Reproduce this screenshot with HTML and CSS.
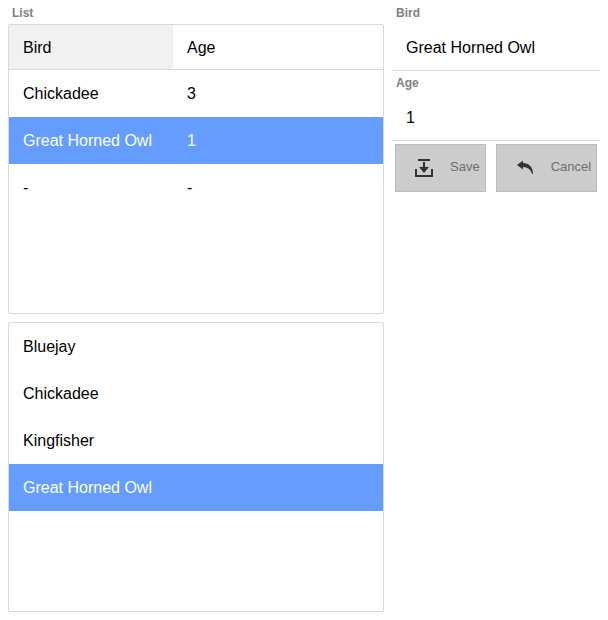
FILE: index.html
```html
<!DOCTYPE html>
<html lang="en">
<head>
<meta charset="utf-8">
<meta name="viewport" content="width=device-width, initial-scale=1">
<title>Birds</title>
<link rel="stylesheet" href="styles.css">
</head>
<body>
<main class="layout">
  <section class="lists">
    <h2 class="label" id="list-label">List</h2>
    <div class="box">
      <table class="grid" aria-labelledby="list-label">
        <thead>
          <tr><th class="current name">Bird</th><th>Age</th></tr>
        </thead>
        <tbody>
          <tr><td>Chickadee</td><td>3</td></tr>
          <tr class="selected"><td>Great Horned Owl</td><td>1</td></tr>
          <tr><td>-</td><td>-</td></tr>
        </tbody>
      </table>
    </div>
    <ul class="box options">
      <li>Bluejay</li>
      <li>Chickadee</li>
      <li>Kingfisher</li>
      <li class="selected">Great Horned Owl</li>
    </ul>
  </section>
  <form class="editor">
    <label class="label" for="bird">Bird</label>
    <input class="field" id="bird" type="text" value="Great Horned Owl">
    <label class="label" for="age">Age</label>
    <input class="field" id="age" type="text" value="1">
    <div class="actions">
      <button class="button" type="button">
        <svg class="icon" viewBox="0 0 24 24" aria-hidden="true"><path d="M6 4h12v2H6zM11 7h2v5h4l-5 6-5-6h4zM3 14h2v6h14v-6h2v8H3z"/></svg>
        <span>Save</span>
      </button>
      <button class="button" type="button">
        <svg class="icon" viewBox="0 0 24 24" aria-hidden="true"><path d="M4 10L10 5.500V8c6 0 10 4 10 11h-1c-1-4-4-7-9-7v2.500z"/></svg>
        <span>Cancel</span>
      </button>
    </div>
  </form>
</main>
</body>
</html>
```
FILE: styles.css
```css
* {
  box-sizing: border-box;
}

body {
  margin: 0;
  background: #fff;
  color: #000;
  font: 16px/20px "Liberation Sans", Arial, sans-serif;
}

.layout {
  display: grid;
  grid-template-columns: 376fr 208fr;
  gap: 8px;
  padding: 1px 8px 8px;
}

.lists,
.editor {
  display: flex;
  flex-direction: column;
  min-width: 0;
}

.label {
  height: 23px;
  margin: 0;
  padding: 4px 4px 3px;
  color: #808080;
  font-size: 12px;
  font-weight: bold;
  line-height: 16px;
}

.box {
  min-height: 290px;
  margin: 0 0 8px;
  padding: 0;
  border: 1px solid #d9d9d9;
  border-radius: 2px;
}

.box:last-child {
  margin-bottom: 0;
}

.grid {
  width: 100%;
  border-collapse: separate;
  border-spacing: 0;
  table-layout: fixed;
}

.grid th,
.grid td {
  height: 47px;
  padding: 0 14px;
  font-weight: normal;
  text-align: left;
}

.grid th {
  height: 45px;
  padding-top: 2px;
  border-bottom: 1px solid #d9d9d9;
}

.grid .name {
  width: 164px;
}

.grid .current {
  background: #f1f1f1;
}

.options {
  list-style: none;
}

.options li {
  padding: 14px 14px 13px;
}

.selected {
  background: #659cff;
  color: #fff;
}

.field {
  width: 100%;
  height: 47px;
  padding: 2px 14px 0;
  border: 0;
  border-bottom: 1px solid #d9d9d9;
  background: transparent;
  color: inherit;
  font: inherit;
}

.actions {
  display: flex;
  gap: 10px;
  padding: 3px;
}

.button {
  display: flex;
  align-items: center;
  gap: 14px;
  height: 48px;
  padding: 0 5px 2px 16px;
  border: 1px solid #bdbdbd;
  background: #ccc;
  color: #6e6e6e;
  font: inherit;
  font-size: 13px;
}

.icon {
  flex: none;
  width: 24px;
  height: 24px;
  fill: #333;
}
```
